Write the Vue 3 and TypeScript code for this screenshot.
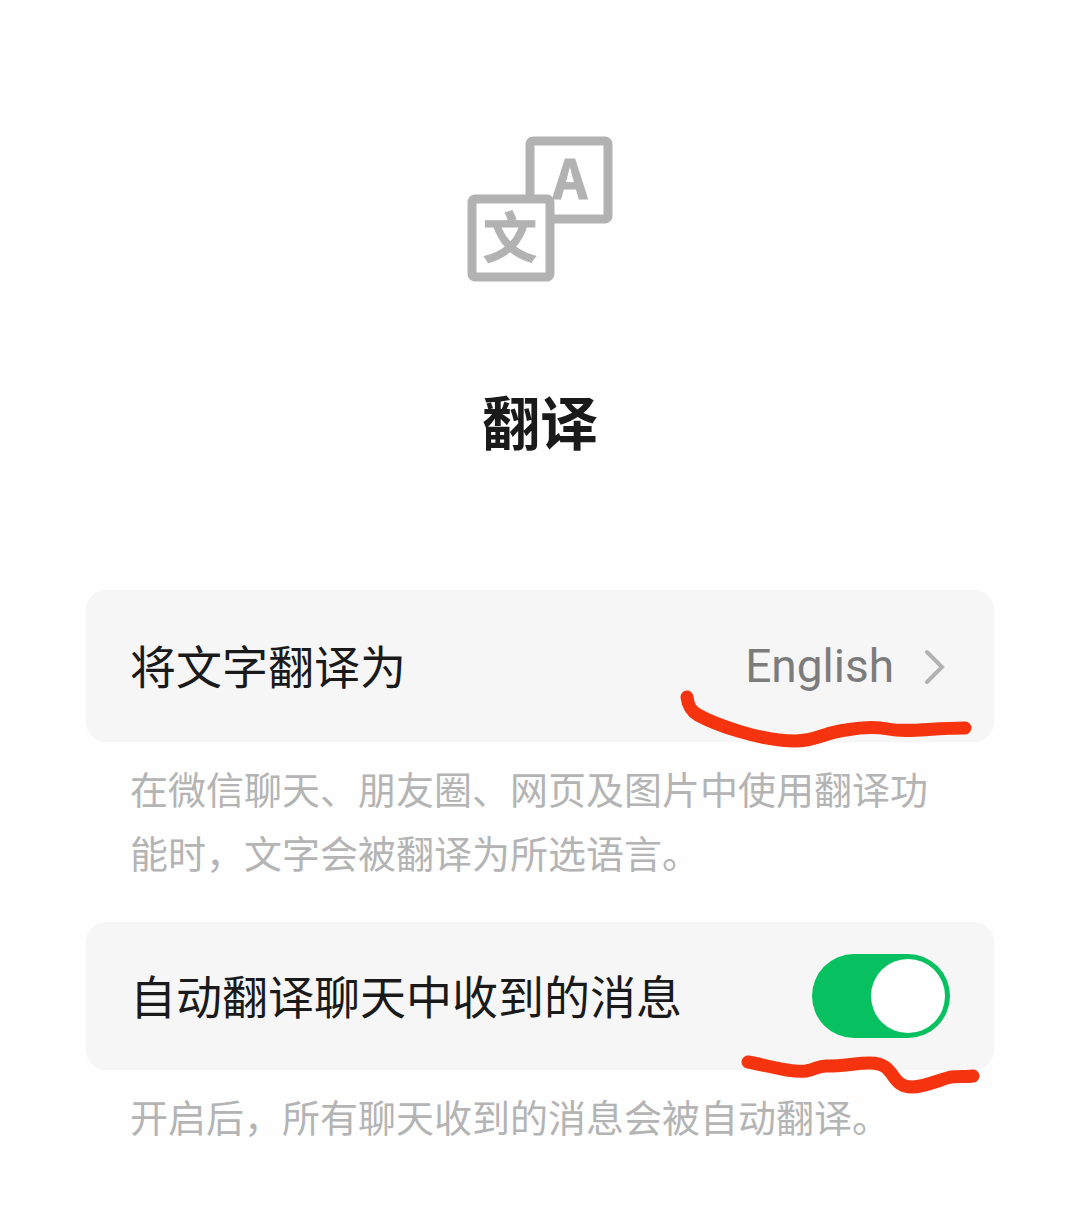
<script setup lang="ts">
import { ref } from 'vue'

const language = ref<string>('English')
const autoTranslate = ref<boolean>(true)
</script>

<template>
  <main class="page">
    <header class="intro">
      <svg class="logo" viewBox="0 0 146 146" aria-hidden="true">
        <rect x="63" y="5" width="78" height="78" rx="3" />
        <rect class="front" x="5" y="63" width="78" height="78" rx="3" />
        <text x="103" y="63">A</text>
        <text x="43" y="122">文</text>
      </svg>
      <h1>翻译</h1>
    </header>

    <section class="group">
      <button class="card link-card" type="button" aria-describedby="language-hint">
        <span class="label">将文字翻译为</span>
        <span class="value">{{ language }}</span>
        <svg class="chevron" viewBox="0 0 26 36" aria-hidden="true">
          <path d="M3 4 L18 19 L3 34" />
        </svg>
        <svg class="mark mark-language" viewBox="0 0 292 60" aria-hidden="true">
          <path d="M7 7 C8 16 11 21 18 25 C34 34 80 51 115 51 C136 51 146 42 166 40 C182 37 198 37 208 39 C228 43 250 38 285 38" />
        </svg>
      </button>
      <p id="language-hint" class="hint">在微信聊天、朋友圈、网页及图片中使用翻译功能时，文字会被翻译为所选语言。</p>
    </section>

    <section class="group">
      <div class="card">
        <label class="label" for="auto-translate">自动翻译聊天中收到的消息</label>
        <input
          id="auto-translate"
          v-model="autoTranslate"
          class="switch"
          type="checkbox"
          role="switch"
          aria-describedby="auto-hint"
        />
        <svg class="mark mark-auto" viewBox="0 0 240 44" aria-hidden="true">
          <path d="M8 8 C30 12 52 19 66 17 C77 15 79 11 88 12 C102 12 118 9 130 9 C157 9 149 33 172 33 C184 33 202 25 211 23 C218 22 226 23 233 22" />
        </svg>
      </div>
      <p id="auto-hint" class="hint">开启后，所有聊天收到的消息会被自动翻译。</p>
    </section>
  </main>
</template>

<style>
body {
  margin: 0;
  background: #fefefe;
}
</style>

<style scoped>
.page {
  box-sizing: border-box;
  padding: 136px 86px 36px;
  color: #1a1a1a;
  font-family: "Noto Sans CJK SC", sans-serif;
}

.intro {
  display: flex;
  flex-direction: column;
  align-items: center;
  gap: 98px;
  margin-bottom: 130px;
}

.logo {
  width: 146px;
  height: 146px;
}

.logo rect {
  fill: none;
  stroke: #b2b2b2;
  stroke-width: 9px;
}

.logo .front {
  fill: #fefefe;
}

.logo text {
  fill: #b2b2b2;
  stroke: #b2b2b2;
  stroke-width: 1px;
  font-size: 54px;
  font-weight: 700;
  text-anchor: middle;
}

h1 {
  margin: 0;
  font-size: 58px;
  font-weight: 700;
  line-height: 80px;
}

.group {
  margin-bottom: 38px;
}

.card {
  position: relative;
  display: flex;
  align-items: center;
  box-sizing: border-box;
  width: 100%;
  padding: 32px 44px;
  border: 0;
  border-radius: 20px;
  background: #f6f6f6;
  color: inherit;
  font-family: inherit;
  text-align: left;
}

.link-card {
  padding: 44px;
  cursor: pointer;
}

.label {
  flex: 1;
  padding-bottom: 4px;
  font-size: 46px;
  line-height: 60px;
}

.value {
  color: #7c7c7c;
  font-family: Roboto, sans-serif;
  font-size: 46px;
  line-height: 64px;
}

.chevron {
  width: 26px;
  height: 36px;
  margin-left: 30px;
}

.chevron path {
  fill: none;
  stroke: #b2b2b2;
  stroke-width: 4px;
  stroke-linecap: round;
}

.switch {
  display: flex;
  align-items: center;
  justify-content: flex-start;
  box-sizing: border-box;
  width: 138px;
  height: 84px;
  margin: 0;
  padding: 5px;
  border-radius: 42px;
  appearance: none;
  background: #d9d9d9;
  cursor: pointer;
}

.switch::before {
  width: 74px;
  height: 74px;
  border-radius: 50%;
  background: #ffffff;
  content: "";
}

.switch:checked {
  justify-content: flex-end;
  background: #07c160;
}

.hint {
  margin: 14px 0 0;
  padding: 0 44px;
  color: #b4b4b4;
  font-size: 38px;
  line-height: 64px;
}

.mark {
  position: absolute;
  pointer-events: none;
}

.mark path {
  fill: none;
  stroke: #f5330f;
  stroke-width: 13px;
  stroke-linecap: round;
  stroke-linejoin: round;
}

.mark-language {
  top: 100px;
  right: 22px;
  width: 292px;
  height: 60px;
}

.mark-auto {
  top: 132px;
  right: 14px;
  width: 240px;
  height: 44px;
}
</style>
